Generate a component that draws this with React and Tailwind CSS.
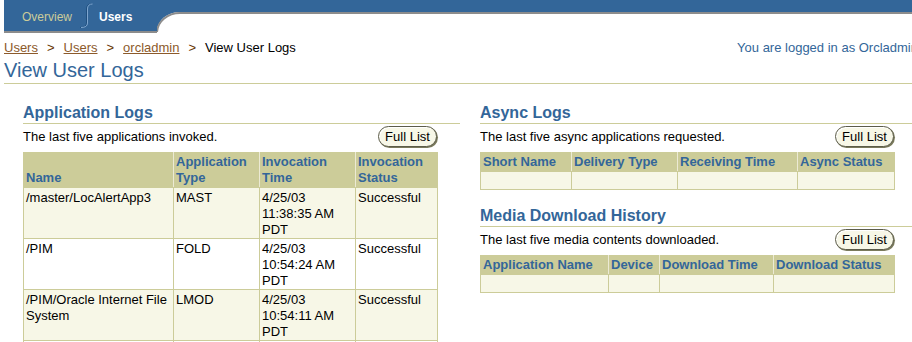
const FONT = "font-['Liberation_Sans',Arial,sans-serif]";

function FullList() {
  return (
    <button className="h-[21px] w-[59px] shrink-0 rounded-full border border-[#5c5c4a] bg-[#f7f7e7] shadow-[1px_1px_0_#7a7a5c,inset_1px_1px_0_#ffffff] text-[13px] leading-[16px] text-black">
      Full List
    </button>
  );
}

function Section({ title, desc, children, className = "" }) {
  return (
    <div className={className}>
      <div className="h-[21px] border-b border-[#cccc99] text-[16px] leading-[20px] font-bold text-[#336699] whitespace-nowrap">
        {title}
      </div>
      <div className="w-[414px] h-[25px] flex items-center justify-between">
        <span className="text-[13px] leading-[16px] text-black">{desc}</span>
        <FullList />
      </div>
      <div className="mt-[3px]">{children}</div>
    </div>
  );
}

function DataTable({ cols, heads, rows, emptyHeight = 18 }) {
  return (
    <table className="border-collapse table-fixed text-[13px] leading-[16px]" style={{ width: cols.reduce((a, b) => a + b, 0) + 1 }}>
      <colgroup>
        {cols.map((w, i) => (
          <col key={i} style={{ width: w }} />
        ))}
      </colgroup>
      <thead>
        <tr>
          {heads.map((h, i) => (
            <th
              key={i}
              className={
                "bg-[#cccc99] text-[#336699] font-bold text-left align-bottom px-[2px] pt-[1px] pb-[1px] border border-[#cccc99] whitespace-nowrap " +
                (i < heads.length - 1 ? "border-r-[#ecead4]" : "")
              }
            >
              {h}
            </th>
          ))}
        </tr>
      </thead>
      <tbody>
        {rows.map((r, ri) => (
          <tr key={ri} className={ri % 2 === 0 ? "bg-[#f7f7e7]" : "bg-white"}>
            {r.map((c, ci) => (
              <td
                key={ci}
                className="border border-[#cccc99] align-top px-[2px] pt-[2px] pb-0 text-black"
                style={r.every((x) => x === "") ? { height: emptyHeight } : undefined}
              >
                {c}
              </td>
            ))}
          </tr>
        ))}
      </tbody>
    </table>
  );
}

export default function App() {
  const appRows = [
    ["/master/LocAlertApp3", "MAST", <>4/25/03<br />11:38:35 AM<br />PDT</>, "Successful"],
    ["/PIM", "FOLD", <>4/25/03<br />10:54:24 AM<br />PDT</>, "Successful"],
    ["/PIM/Oracle Internet File System", "LMOD", <>4/25/03<br />10:54:11 AM<br />PDT</>, "Successful"],
    ["", "", "", ""],
  ];

  return (
    <div className={"w-[912px] h-[342px] overflow-hidden bg-white " + FONT}>
      <div className="w-[930px]">
        {/* Tab bar */}
        <div className="flex items-start pl-[4px] h-[34px]">
          <div className="w-[153px] h-[33px] shrink-0 bg-[#336699] border-b-2 border-[#8c8c8c] flex items-center pl-[18px] pt-[2px]">
            <span className="text-[12px] leading-[16px] text-[#cccc99]">Overview</span>
            <svg width="13" height="28" viewBox="0 0 13 28" className="ml-[8px] self-start shrink-0">
              <path d="M12.5 2 Q7.5 2 7.5 7 V21 Q7.5 25.5 1 25.5" stroke="#1f4f7f" strokeWidth="1" fill="none" transform="translate(-1 0)" />
              <path d="M12.5 2 Q7.5 2 7.5 7 V21 Q7.5 25.5 1 25.5" stroke="#7fa6cf" strokeWidth="1" fill="none" />
            </svg>
            <span className="ml-[6px] text-[12px] leading-[16px] font-bold text-white">Users</span>
          </div>
          <svg width="26" height="33" viewBox="0 0 26 33" className="shrink-0 block">
            <path d="M0 0 H26 V12 H23 A23 19 0 0 0 0 31 Z" fill="#336699" />
            <path d="M0 32 A23 20 0 0 1 23 13 H26" stroke="#8c8c8c" strokeWidth="2" fill="none" />
          </svg>
          <div className="flex-1 h-[14px] bg-[#336699] border-b-2 border-[#8c8c8c]" />
        </div>

        {/* Breadcrumbs */}
        <div className="mt-[6px] h-[16px] flex items-center pl-[4px] pr-[12px] text-[13px] leading-[16px]">
          <a className="text-[#8c5a2b] underline">Users</a>
          <span className="mx-[9px] text-[#663300]">&gt;</span>
          <a className="text-[#8c5a2b] underline">Users</a>
          <span className="mx-[9px] text-[#663300]">&gt;</span>
          <a className="text-[#8c5a2b] underline">orcladmin</a>
          <span className="mx-[9px] text-[#663300]">&gt;</span>
          <span className="text-black">View User Logs</span>
          <span className="ml-auto text-[#336699] whitespace-nowrap">You are logged in as Orcladmin</span>
        </div>

        {/* Title */}
        <div className="mt-[2px] ml-[4px] h-[26px] border-b border-[#cccc99] text-[20px] leading-[24px] text-[#336699]">
          View User Logs
        </div>

        {/* Columns */}
        <div className="mt-[19px] flex items-start">
          <Section
            className="ml-[23px] w-[437px] shrink-0"
            title="Application Logs"
            desc="The last five applications invoked."
          >
            <DataTable
              cols={[150, 86, 96, 82]}
              heads={["Name", <>Application<br />Type</>, <>Invocation<br />Time</>, <>Invocation<br />Status</>]}
              rows={appRows}
              emptyHeight={51}
            />
          </Section>

          <div className="ml-[20px] flex-1">
            <Section title="Async Logs" desc="The last five async applications requested.">
              <DataTable
                cols={[91, 106, 120, 97]}
                heads={["Short Name", "Delivery Type", "Receiving Time", "Async Status"]}
                rows={[["", "", "", ""]]}
              />
            </Section>
            <Section
              className="mt-[16px]"
              title="Media Download History"
              desc="The last five media contents downloaded."
            >
              <DataTable
                cols={[128, 51, 114, 121]}
                heads={["Application Name", "Device", "Download Time", "Download Status"]}
                rows={[["", "", "", ""]]}
              />
            </Section>
          </div>
        </div>
      </div>
    </div>
  );
}
